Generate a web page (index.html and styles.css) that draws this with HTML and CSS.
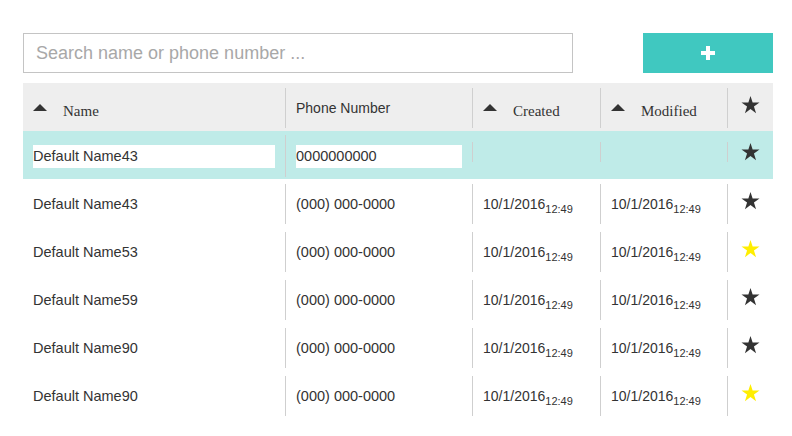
FILE: index.html
```html
<!DOCTYPE html>
<html>
<head>
<meta charset="utf-8">
<link rel="stylesheet" href="styles.css">
</head>
<body>
<div class="page">
  <div class="toolbar">
    <input class="search" type="text" placeholder="Search name or phone number ...">
    <button class="add" type="button"><svg width="14" height="14" viewBox="0 0 14 14"><rect x="5" y="0" width="4" height="14" fill="#fff"/><rect x="0" y="5" width="14" height="4" fill="#fff"/></svg></button>
  </div>
  <div class="grid">
    <div class="row head">
      <div class="c c1"><div class="in"><span class="caret"></span><span class="serif">Name</span></div></div>
      <div class="c c2"><div class="in"><span class="htext">Phone Number</span></div></div>
      <div class="c c3"><div class="in"><span class="caret"></span><span class="serif">Created</span></div></div>
      <div class="c c4"><div class="in"><span class="caret"></span><span class="serif">Modified</span></div></div>
      <div class="c c5"><div class="in star-cell"><svg class="star dark" viewBox="0 0 20 19"><polygon points="10,0 12.25,6.91 19.51,6.91 13.63,11.18 15.88,18.09 10,13.82 4.12,18.09 6.37,11.18 0.49,6.91 7.75,6.91"/></svg></div></div>
    </div>
    <div class="row sel">
      <div class="c c1 tall"><div class="in"><input class="edit edit-name" type="text" value="Default Name43"></div></div>
      <div class="c c2 tall"><div class="in"><input class="edit edit-phone" type="text" value="0000000000"></div></div>
      <div class="c c3 short"><div class="in"></div></div>
      <div class="c c4 short"><div class="in"></div></div>
      <div class="c c5 short"><div class="in star-cell"><svg class="star dark flat" viewBox="0 0 20 19"><polygon points="10,0 12.25,6.91 19.51,6.91 13.63,11.18 15.88,18.09 10,13.82 4.12,18.09 6.37,11.18 0.49,6.91 7.75,6.91"/></svg></div></div>
    </div>
    <div class="row">
      <div class="c c1"><div class="in"><span class="val">Default Name43</span></div></div>
      <div class="c c2"><div class="in"><span class="val">(000) 000-0000</span></div></div>
      <div class="c c3"><div class="in"><span class="date">10/1/2016<sub>12:49</sub></span></div></div>
      <div class="c c4"><div class="in"><span class="date">10/1/2016<sub>12:49</sub></span></div></div>
      <div class="c c5"><div class="in star-cell"><svg class="star dark" viewBox="0 0 20 19"><polygon points="10,0 12.25,6.91 19.51,6.91 13.63,11.18 15.88,18.09 10,13.82 4.12,18.09 6.37,11.18 0.49,6.91 7.75,6.91"/></svg></div></div>
    </div>
    <div class="row">
      <div class="c c1"><div class="in"><span class="val">Default Name53</span></div></div>
      <div class="c c2"><div class="in"><span class="val">(000) 000-0000</span></div></div>
      <div class="c c3"><div class="in"><span class="date">10/1/2016<sub>12:49</sub></span></div></div>
      <div class="c c4"><div class="in"><span class="date">10/1/2016<sub>12:49</sub></span></div></div>
      <div class="c c5"><div class="in star-cell"><svg class="star gold" viewBox="0 0 20 19"><polygon points="10,0 12.25,6.91 19.51,6.91 13.63,11.18 15.88,18.09 10,13.82 4.12,18.09 6.37,11.18 0.49,6.91 7.75,6.91"/></svg></div></div>
    </div>
    <div class="row">
      <div class="c c1"><div class="in"><span class="val">Default Name59</span></div></div>
      <div class="c c2"><div class="in"><span class="val">(000) 000-0000</span></div></div>
      <div class="c c3"><div class="in"><span class="date">10/1/2016<sub>12:49</sub></span></div></div>
      <div class="c c4"><div class="in"><span class="date">10/1/2016<sub>12:49</sub></span></div></div>
      <div class="c c5"><div class="in star-cell"><svg class="star dark" viewBox="0 0 20 19"><polygon points="10,0 12.25,6.91 19.51,6.91 13.63,11.18 15.88,18.09 10,13.82 4.12,18.09 6.37,11.18 0.49,6.91 7.75,6.91"/></svg></div></div>
    </div>
    <div class="row">
      <div class="c c1"><div class="in"><span class="val">Default Name90</span></div></div>
      <div class="c c2"><div class="in"><span class="val">(000) 000-0000</span></div></div>
      <div class="c c3"><div class="in"><span class="date">10/1/2016<sub>12:49</sub></span></div></div>
      <div class="c c4"><div class="in"><span class="date">10/1/2016<sub>12:49</sub></span></div></div>
      <div class="c c5"><div class="in star-cell"><svg class="star dark" viewBox="0 0 20 19"><polygon points="10,0 12.25,6.91 19.51,6.91 13.63,11.18 15.88,18.09 10,13.82 4.12,18.09 6.37,11.18 0.49,6.91 7.75,6.91"/></svg></div></div>
    </div>
    <div class="row">
      <div class="c c1"><div class="in"><span class="val">Default Name90</span></div></div>
      <div class="c c2"><div class="in"><span class="val">(000) 000-0000</span></div></div>
      <div class="c c3"><div class="in"><span class="date">10/1/2016<sub>12:49</sub></span></div></div>
      <div class="c c4"><div class="in"><span class="date">10/1/2016<sub>12:49</sub></span></div></div>
      <div class="c c5"><div class="in star-cell"><svg class="star gold" viewBox="0 0 20 19"><polygon points="10,0 12.25,6.91 19.51,6.91 13.63,11.18 15.88,18.09 10,13.82 4.12,18.09 6.37,11.18 0.49,6.91 7.75,6.91"/></svg></div></div>
    </div>
  </div>
</div>
</body>
</html>
```

FILE: styles.css
```css
html, body {
  margin: 0;
  padding: 0;
  background: #fff;
}
body {
  font-family: "Liberation Sans", Arial, sans-serif;
  color: #333;
  font-size: 14px;
}
.page {
  width: 750px;
  padding: 33px 0 0 23px;
}
.toolbar {
  display: flex;
  justify-content: space-between;
  height: 40px;
  margin-bottom: 10px;
}
.search {
  width: 550px;
  height: 40px;
  box-sizing: border-box;
  border: 1px solid #c4c4c4;
  padding: 0 12px;
  margin: 0;
  font-family: "Liberation Sans", Arial, sans-serif;
  font-size: 18px;
  color: #333;
  outline: none;
}
.search::placeholder {
  color: #a8a8a8;
}
.add {
  width: 130px;
  height: 40px;
  border: 0;
  margin: 0;
  padding: 0;
  background: #40c8c0;
  display: flex;
  align-items: center;
  justify-content: center;
}
.grid {
  display: flex;
  flex-direction: column;
}
.row {
  display: flex;
  height: 48px;
}
.head {
  background: #eeeeee;
}
.sel {
  background: #bfebe8;
}
.c {
  box-sizing: border-box;
  padding-top: 5px;
}
.c1 { width: 262px; }
.c2 { width: 187px; }
.c3 { width: 128px; }
.c4 { width: 127px; }
.c5 { width: 46px; }
.in {
  height: 40px;
  display: flex;
  align-items: center;
  padding-left: 10px;
  border-left: 1px solid #cfcfcf;
}
.c1 .in {
  border-left: 0;
}
.tall {
  padding-top: 4px;
}
.tall .in {
  height: 42px;
}
.short {
  padding-top: 11px;
}
.short .in {
  height: 20px;
}
.caret {
  width: 0;
  height: 0;
  border-left: 7px solid transparent;
  border-right: 7px solid transparent;
  border-bottom: 7px solid #333;
  margin-right: 16px;
  margin-top: -1px;
}
.serif {
  font-family: "Liberation Serif", "Times New Roman", serif;
  font-size: 15px;
  padding-top: 6px;
}
.htext {
  font-size: 14px;
}
.val {
  font-size: 14.5px;
}
.date {
  font-size: 14px;
}
.date sub {
  font-size: 11px;
  line-height: 0;
}
.edit {
  border: 0;
  margin: 0;
  padding: 0;
  height: 23px;
  background: #fff;
  font-family: "Liberation Sans", Arial, sans-serif;
  font-size: 14.5px;
  color: #333;
  outline: none;
}
.edit-name {
  width: 242px;
}
.edit-phone {
  width: 166px;
}
.star-cell {
  padding-left: 0;
  justify-content: center;
}
.star {
  width: 19px;
  height: 18px;
  margin-bottom: 7px;
  margin-right: 1px;
}
.star.flat {
  margin-bottom: 0;
}
.dark {
  fill: #333;
}
.gold {
  fill: #ffee00;
}
```
